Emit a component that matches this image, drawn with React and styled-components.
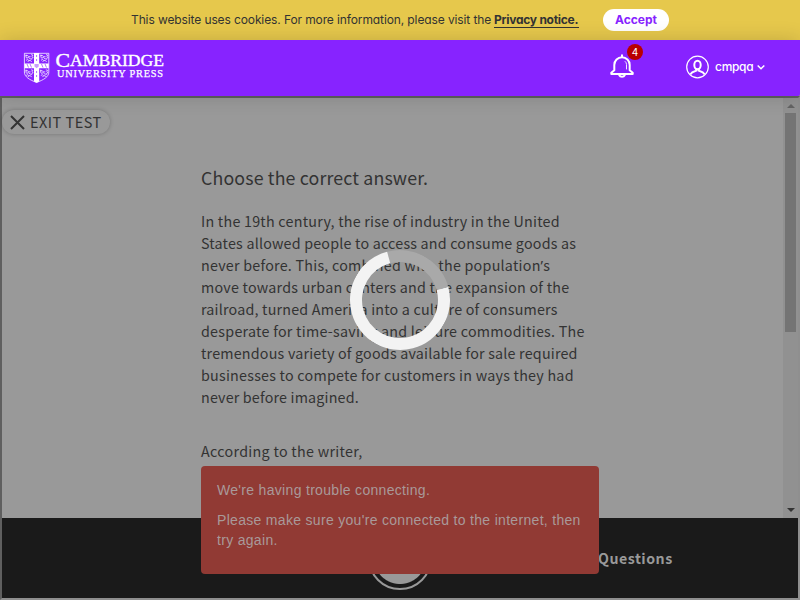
import React from "react";
import styled, { createGlobalStyle } from "styled-components";

const Global = createGlobalStyle`
  * { box-sizing: border-box; }
  body { margin: 0; overflow: hidden; background: #999; }
`;

const sans = `"Noto Sans CJK SC", "Noto Sans", sans-serif`;
const ui = `Inter, Lato, sans-serif`;

const Page = styled.div`
  position: relative;
  width: 800px;
  height: 600px;
  display: flex;
  flex-direction: column;
  overflow: hidden;
`;

const CookieBar = styled.div`
  flex: none;
  height: 40px;
  display: flex;
  align-items: center;
  padding-left: 131px;
  background: #e6c84c;
  color: #333;
  font: 400 12px/20px ${ui};
  font-feature-settings: "cv11";
  white-space: nowrap;
`;

const CookieText = styled.span`
  width: 363px;
  letter-spacing: -0.11px;
`;

const PrivacyLink = styled.a`
  width: 85px;
  height: 16px;
  line-height: 15px;
  font-weight: 700;
  letter-spacing: -0.26px;
  border-bottom: 1px solid #333;
`;

const AcceptButton = styled.button`
  width: 66px;
  height: 22px;
  margin-left: 24px;
  padding: 0;
  border: 0;
  border-radius: 11px;
  background: #fff;
  color: #8723ff;
  font: 700 12px/22px ${ui};
  font-feature-settings: "cv11";
`;

const Header = styled.header`
  position: relative;
  z-index: 2;
  flex: none;
  height: 56px;
  display: flex;
  align-items: flex-start;
  padding-left: 24px;
  background: #8723ff;
  color: #fff;
  border-radius: 0 0 2px 0;
  box-shadow: 0 0 20px rgba(0, 0, 0, 0.16);
`;

const Logo = styled.svg`
  flex: none;
  margin-top: 12px;
  overflow: visible;
`;

const Notifications = styled.div`
  position: relative;
  margin: 13px 0 0 444px;
  width: 26px;
  height: 28px;
`;

const Badge = styled.span`
  position: absolute;
  left: 17px;
  top: -9px;
  width: 16px;
  height: 16px;
  border-radius: 50%;
  background: #b90000;
  font: 400 10px/16px ${ui};
  text-align: center;
`;

const Account = styled.div`
  display: flex;
  align-items: center;
  margin: 15px 0 0 50px;
  height: 24px;
`;

const UserName = styled.span`
  width: 38px;
  margin: 0 4px 0 5px;
  font: 500 12px/24px ${ui};
  font-feature-settings: "cv11";
  letter-spacing: -0.3px;
`;

const Frame = styled.main`
  flex: 1;
  display: flex;
  flex-direction: column;
  border: 2px solid;
  border-color: #5f5f5f #8f8f8f #8f8f8f #5f5f5f;
  background: #999;
`;

const Body = styled.div`
  flex: none;
  height: 420px;
  display: flex;
`;

const Content = styled.div`
  flex: 1;
  padding-top: 12px;
  color: #333;
`;

const ExitButton = styled.button`
  display: flex;
  align-items: center;
  width: 108px;
  height: 24px;
  padding: 0 0 0 8px;
  gap: 5px;
  border: 0;
  border-radius: 12px;
  background: #999;
  box-shadow: 0 0 4px rgba(0, 0, 0, 0.24);
  color: #333;
  font: 400 14.5px/24px ${sans};
  letter-spacing: 0.5px;
  white-space: nowrap;
`;

const Article = styled.article`
  margin: 30px 0 0 199px;
  width: 400px;
`;

const Title = styled.h1`
  margin: 0;
  font: 400 17.8px/26px ${sans};
  letter-spacing: 0.14px;
`;

const Paragraph = styled.p`
  margin: ${(p) => p.$top}px 0 0;
  font: 400 14.3px/22px ${sans};
`;

const Line = styled.span`
  display: block;
  height: 22px;
  white-space: nowrap;
  letter-spacing: ${(p) => p.$spacing ?? 0.22}px;
`;

const Apostrophe = styled.span`
  font-family: "Noto Sans", sans-serif;
  line-height: 1;
`;

const ScrollBar = styled.div`
  width: 15px;
  display: flex;
  flex-direction: column;
  align-items: center;
  background: #919191;
`;

const ScrollArrow = styled.svg`
  flex: none;
  display: block;
`;

const Thumb = styled.div`
  width: 11px;
  height: 219px;
  margin-bottom: auto;
  background: #747474;
`;

const Footer = styled.footer`
  position: relative;
  flex: 1;
  display: flex;
  background: #1a1a1a;
  color: #999;
`;

const Dial = styled.div`
  width: 64px;
  height: 64px;
  margin: 8px 0 0 366px;
  border: 2px solid #999;
  border-radius: 50%;
  background: radial-gradient(circle, #999 25.5px, #1a1a1a 26.5px);
`;

const Questions = styled.span`
  margin: 28px 0 0 166px;
  font: 700 14.2px/24px ${sans};
  letter-spacing: 0.5px;
`;

const Toast = styled.div`
  position: absolute;
  left: 201px;
  top: 466px;
  width: 398px;
  height: 108px;
  padding: 14px 16px;
  border-radius: 4px;
  background: #913a34;
  color: #a99999;
  font: 400 14px/20px "Liberation Sans", Arial, sans-serif;
`;

const ToastLine = styled.p`
  margin: 0 0 10px;
  letter-spacing: 0.31px;
  white-space: nowrap;
`;

const Spinner = styled.div`
  position: absolute;
  left: 350px;
  top: 250px;
  width: 100px;
  height: 100px;
  border: 12px solid #f3f3f3;
  border-top-color: #a9a9a9;
  border-radius: 50%;
  transform: rotate(30deg);
`;

const LINES = [
  "In the 19th century, the rise of industry in the United",
  "States allowed people to access and consume goods as",
  <>never before. This, combined with the population<Apostrophe>’</Apostrophe>s</>,
  "move towards urban centers and the expansion of the",
  "railroad, turned America into a culture of consumers",
  "desperate for time-saving and leisure commodities. The",
  "tremendous variety of goods available for sale required",
  "businesses to compete for customers in ways they had",
  "never before imagined.",
];

const SPACING = [0.24, 0.2, 0.24, 0.23, 0.2, 0.26, 0.2, 0.24, 0.18];

const Lion = ({ x, y }) => (
  <path
    transform={`translate(${x} ${y})`}
    d="M0 1.2h2l1 1.2h2M5.5.3l1.8.5-.8 1.5 1 1-1.5.8M1 3.8l2-.6 1.5 1.3 2 .4M.5 6l1.5-.8 1.3 1 1.7.1 1 1.3M3.2 6.3l-1 1.3M.4.2v2.6l.8 1"
    fill="none"
    stroke="#fff"
    strokeWidth=".75"
  />
);

function CambridgeLogo() {
  return (
    <Logo width="142" height="32" viewBox="0 0 142 32">
      <path d="M.4 1.3h24.4V20c0 5-5.2 7.8-12.2 10.5C5.6 27.8.4 25 .4 20z" fill="none" stroke="#fff" strokeWidth=".75" />
      <path d="M10 1h5.2v10.4h9.5v4.8h-9.5v13.2l-2.6 1.3-2.6-1.3V16.2H.5v-4.8H10z" fill="#fff" />
      <path d="M3 12l1.5 3.5M6 12l1.5 3.5M17.5 12l1.5 3.5M21 12l1.5 3.5M12.6 3v2M12.6 7v2M12.6 19v2M12.6 23v2" stroke="#8723ff" strokeWidth=".65" />
      <path d="M10.5 12h4.2v2.5l-2.1 1.7-2.1-1.7z" fill="#8723ff" opacity=".45" />
      <Lion x={1.6} y={2.3} />
      <Lion x={16.5} y={2.3} />
      <Lion x={1.6} y={17.5} />
      <Lion x={16.3} y={17.5} />
      <g fill="#fff" stroke="#fff" fontFamily="Liberation Serif, serif">
        <text x="31.5" y="14.6" fontSize="19.5" strokeWidth=".4" textLength="14.5" lengthAdjust="spacingAndGlyphs">C</text>
        <text x="46" y="14.3" fontSize="16" strokeWidth=".35" textLength="94" lengthAdjust="spacingAndGlyphs">AMBRIDGE</text>
        <text x="33" y="25.2" fontSize="10.3" strokeWidth=".25" textLength="106" lengthAdjust="spacing">UNIVERSITY PRESS</text>
      </g>
    </Logo>
  );
}

export default function App() {
  return (
    <Page>
      <Global />
      <CookieBar>
        <CookieText>This website uses cookies. For more information, please visit the</CookieText>
        <PrivacyLink>Privacy notice.</PrivacyLink>
        <AcceptButton>Accept</AcceptButton>
      </CookieBar>
      <Header>
        <CambridgeLogo />
        <Notifications>
          <svg width="26" height="28" viewBox="0 0 26 28" fill="none" stroke="#fff" strokeLinecap="round" strokeLinejoin="round">
            <path d="M12 2.2v1.5M4.3 17.3v-5.3a7.7 7.7 0 0 1 15.4 0v5.3l3 2.5v1.2H1.3v-1.2z" strokeWidth="2" />
            <path d="M15.2 8.5q1.3 1 1.3 3v4.5" strokeWidth=".9" />
            <path d="M9.3 22.2a2.9 2.4 0 0 0 5.4 0" strokeWidth="2" />
          </svg>
          <Badge>4</Badge>
        </Notifications>
        <Account>
          <svg width="24" height="24" viewBox="0 0 24 24" fill="none" stroke="#fff">
            <circle cx="11.5" cy="12" r="10.8" strokeWidth="1.2" />
            <ellipse cx="11.5" cy="10" rx="3.2" ry="4.3" strokeWidth="2" />
            <path d="M10.3 13.5v2.2l-4 1.7-2 2M12.7 13.5v2.2l4 1.7 2 2" strokeWidth="2" />
          </svg>
          <UserName>cmpqa</UserName>
          <svg width="8" height="6" viewBox="0 0 8 6" fill="none" stroke="#fff" strokeWidth="1.5">
            <path d="M.7 1.5L4 4.8 7.3 1.5" />
          </svg>
        </Account>
      </Header>
      <Frame>
        <Body>
          <Content>
            <ExitButton>
              <svg width="15" height="15" viewBox="0 0 15 15" stroke="#333" strokeWidth="2">
                <path d="M1 1l13 13M14 1L1 14" />
              </svg>
              EXIT TEST
            </ExitButton>
            <Article>
              <Title>Choose the correct answer.</Title>
              <Paragraph $top={20}>
                {LINES.map((text, i) => (
                  <Line key={i} $spacing={SPACING[i]}>{text}</Line>
                ))}
              </Paragraph>
              <Paragraph $top={32}>
                <Line $spacing={0.3}>According to the writer,</Line>
              </Paragraph>
            </Article>
          </Content>
          <ScrollBar>
            <ScrollArrow width="15" height="15"><path d="M4 10h8L8 6z" fill="#636363" /></ScrollArrow>
            <Thumb />
            <ScrollArrow width="15" height="15"><path d="M4 5h8L8 9z" fill="#333" /></ScrollArrow>
          </ScrollBar>
        </Body>
        <Footer>
          <Dial />
          <Questions>Questions</Questions>
        </Footer>
      </Frame>
      <Spinner />
      <Toast>
        <ToastLine>We're having trouble connecting.</ToastLine>
        <ToastLine>
          Please make sure you're connected to the internet, then
          <br />
          try again.
        </ToastLine>
      </Toast>
    </Page>
  );
}
